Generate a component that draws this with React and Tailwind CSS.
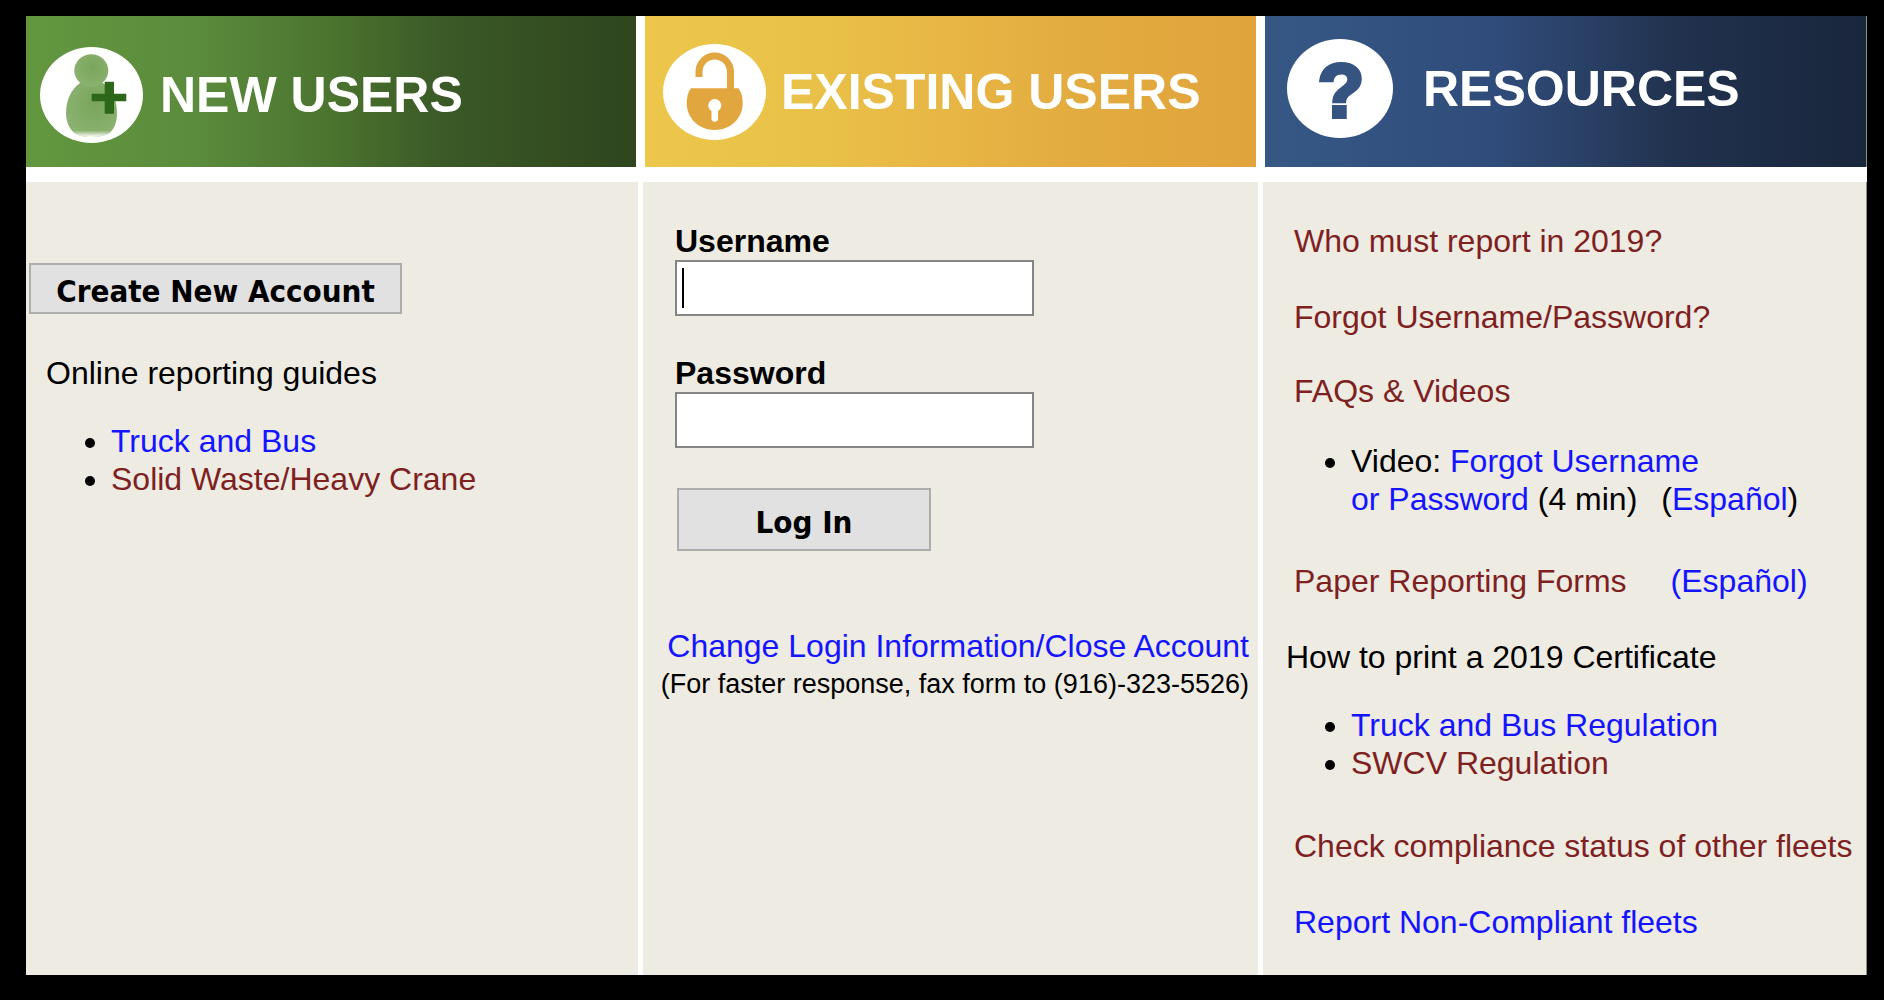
import React from 'react';

const BLUE = 'text-[#1414ff]';
const MAROON = 'text-[#7e1f22]';

function Link({ visited, children }) {
  return (
    <a href="#" className={`${visited ? MAROON : BLUE} hover:underline`}>
      {children}
    </a>
  );
}

function NewUserIcon() {
  return (
    <svg width="103" height="96" viewBox="0 0 103 96" className="shrink-0" aria-hidden="true">
      <defs>
        <radialGradient id="person" cx="0.55" cy="0.4" r="0.65">
          <stop offset="0" stopColor="#78a55a" />
          <stop offset="1" stopColor="#8db373" />
        </radialGradient>
        <linearGradient id="personFade" x1="0" y1="0" x2="0" y2="1">
          <stop offset="0.88" stopColor="#fff" stopOpacity="0" />
          <stop offset="1" stopColor="#fff" />
        </linearGradient>
      </defs>
      <ellipse cx="51.5" cy="48" rx="51.5" ry="48" fill="#fff" />
      <path
        d="M40 36C31 42 26 54 26 66c0 11 5 18 10 21 4 2 8 3 15 3s13-1 17-3c5-3 9-10 9-21 0-12-5-24-14-30z"
        fill="url(#person)"
      />
      <path
        d="M40 36C31 42 26 54 26 66c0 11 5 18 10 21 4 2 8 3 15 3s13-1 17-3c5-3 9-10 9-21 0-12-5-24-14-30z"
        fill="url(#personFade)"
      />
      <ellipse cx="51.3" cy="23.5" rx="17" ry="16.2" fill="url(#person)" />
      <path d="M64.700 34.700h9.300v12h12.300v7.600H74v12.400h-9.300V54.300h-13v-7.600h13z" fill="#2c671a" />
    </svg>
  );
}

function PadlockIcon() {
  return (
    <svg width="103" height="96" viewBox="0 0 103 96" className="shrink-0" aria-hidden="true">
      <ellipse cx="51.5" cy="48" rx="51.5" ry="48" fill="#fff" />
      <path
        d="M36 33v-5c0-9 7-16 15.700-16S67.500 19 67.500 28v18"
        fill="none"
        stroke="#e2a63e"
        strokeWidth="7"
      />
      <path d="M28 44.300h47.500c3 4 4.200 9 4.200 14.700 0 16-13 27-28 27S23.700 75 23.700 59c0-6 1.300-11 4.300-14.700z" fill="#e2a63e" />
      <circle cx="51.800" cy="61.5" r="6.500" fill="#fff" />
      <path d="M48.500 64h6.500v11c0 3.500-6.500 3.500-6.500 0z" fill="#fff" />
    </svg>
  );
}

function QuestionIcon() {
  return (
    <svg width="106" height="99" viewBox="0 0 106 99" className="shrink-0" aria-hidden="true">
      <ellipse cx="53" cy="49.5" rx="53" ry="49.5" fill="#fff" />
      <text
        x="54"
        y="78"
        textAnchor="middle"
        fontSize="76"
        fontWeight="bold"
        fontFamily="Liberation Sans, sans-serif"
        fill="#365482"
        stroke="#365482"
        strokeWidth="4"
      >
        ?
      </text>
    </svg>
  );
}

function Banner({ className, icon, title }) {
  return (
    <div className={`h-[151px] flex items-center ${className}`}>
      {icon}
      <h2 className="text-[50px] leading-[50px] font-bold text-white whitespace-nowrap">{title}</h2>
    </div>
  );
}

function NewUsers() {
  return (
    <section className="bg-[#edebe2] pt-[81px]">
      <button
        type="button"
        className="ml-[3px] w-[373px] h-[51px] pt-1 bg-[#e1e1e1] border-2 border-[#adadad] font-['DejaVu_Sans_Condensed','DejaVu_Sans',sans-serif] font-bold text-[31px] leading-[38px] whitespace-nowrap"
      >
        Create New Account
      </button>
      <p className="mt-10 pl-5">Online reporting guides</p>
      <ul className="mt-[30px] pl-[85px] list-disc">
        <li><Link>Truck and Bus</Link></li>
        <li><Link visited>Solid Waste/Heavy Crane</Link></li>
      </ul>
    </section>
  );
}

function ExistingUsers() {
  return (
    <section className="bg-[#edebe2] pt-10">
      <form className="pl-8" onSubmit={(e) => e.preventDefault()}>
        <label htmlFor="username" className="block font-bold">Username</label>
        <div className="relative">
          <input
            id="username"
            type="text"
            className="block w-[359px] h-14 bg-white border-2 border-[#858585] px-2 outline-none"
          />
          <span className="absolute left-[7px] top-2 w-[2px] h-10 bg-black" />
        </div>
        <label htmlFor="password" className="block mt-[38px] font-bold">Password</label>
        <input
          id="password"
          type="password"
          className="block w-[359px] h-14 bg-white border-2 border-[#858585] px-2 outline-none"
        />
        <button
          type="submit"
          className="ml-[2px] mt-10 w-[254px] h-[63px] pt-1 bg-[#e1e1e1] border-2 border-[#adadad] font-['DejaVu_Sans_Condensed','DejaVu_Sans',sans-serif] font-bold text-[31px] leading-[38px] whitespace-nowrap"
        >
          Log In
        </button>
      </form>
      <div className="mt-[76px] pr-[9px] text-right whitespace-nowrap">
        <Link>Change Login Information/Close Account</Link>
        <p className="text-[27px]">(For faster response, fax form to (916)-323-5526)</p>
      </div>
    </section>
  );
}

function Resources() {
  return (
    <section className="bg-[#edebe2] pt-10 pl-[31px] pb-8 border-r border-[#8f8f8c] whitespace-nowrap">
      <p><Link visited>Who must report in 2019?</Link></p>
      <p className="mt-[38px]"><Link visited>Forgot Username/Password?</Link></p>
      <p className="mt-9"><Link visited>FAQs &amp; Videos</Link></p>
      <ul className="mt-8 pl-[57px] list-disc">
        <li>
          Video: <Link>Forgot Username<br />or Password</Link> (4 min)
          <span className="ml-6">(<Link>Español</Link>)</span>
        </li>
      </ul>
      <p className="mt-11">
        <Link visited>Paper Reporting Forms</Link>
        <span className="ml-11"><Link>(Español)</Link></span>
      </p>
      <p className="mt-[38px] -ml-2">How to print a 2019 Certificate</p>
      <ul className="mt-[30px] pl-[57px] list-disc">
        <li><Link>Truck and Bus Regulation</Link></li>
        <li><Link visited>SWCV Regulation</Link></li>
      </ul>
      <p className="mt-[45px]"><Link visited>Check compliance status of other fleets</Link></p>
      <p className="mt-[38px]"><Link>Report Non-Compliant fleets</Link></p>
    </section>
  );
}

export default function App() {
  return (
    <div className="min-h-screen flex flex-col bg-black pt-4 pr-[17px] pb-[25px] pl-[26px] font-['Liberation_Sans',Arial,sans-serif] text-[32px] leading-[38px] text-black">
      <main className="grow grid grid-cols-[612fr_615fr_604fr] grid-rows-[auto_1fr] gap-x-[5px] gap-y-[15px] bg-white">
        <Banner
          className="mr-[2px] pl-[14px] pt-[7px] gap-[17px] bg-[linear-gradient(90deg,#63973f_0%,#5b8b3c_28%,#4b742f_50%,#3b5a27_68%,#2e451e_100%)]"
          icon={<NewUserIcon />}
          title="NEW USERS"
        />
        <Banner
          className="mx-[2px] pl-[18px] gap-[15px] bg-[linear-gradient(90deg,#ecc74b_0%,#e9c148_28%,#e7b544_52%,#e2ab40_72%,#e1a43c_100%)]"
          icon={<PadlockIcon />}
          title="EXISTING USERS"
        />
        <Banner
          className="ml-[2px] pl-[22px] pb-[6px] gap-[30px] bg-[linear-gradient(90deg,#365885_0%,#304c7a_38%,#2a4167_52%,#21324f_68%,#19263b_100%)] border-r border-[#8f8f8c]"
          icon={<QuestionIcon />}
          title="RESOURCES"
        />
        <NewUsers />
        <ExistingUsers />
        <Resources />
      </main>
    </div>
  );
}
